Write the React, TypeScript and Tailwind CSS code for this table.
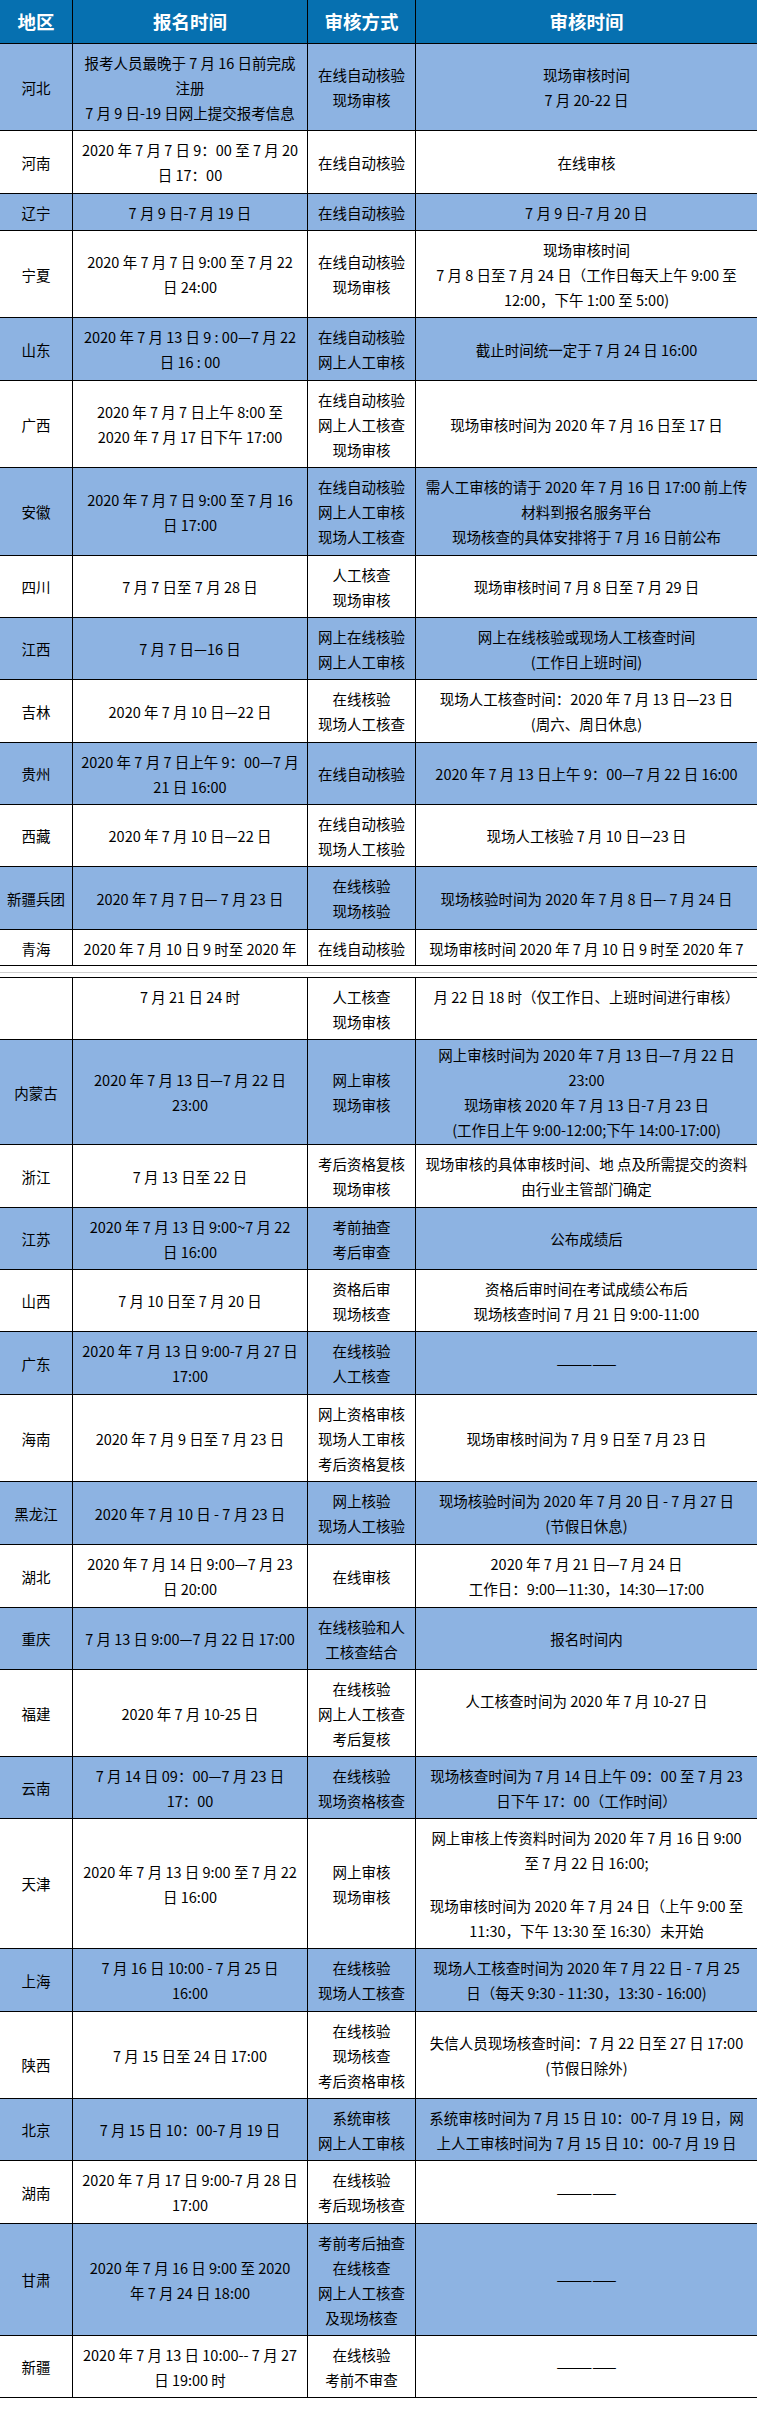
type Row = {
  h: string;
  blue?: boolean;
  top?: boolean;
  cells: string[][];
};

const DASH = "—————";

const table1: Row[] = [
  {
    h: "h-[87px]",
    blue: true,
    cells: [
      ["河北"],
      ["报考人员最晚于 7 月 16 日前完成", "注册", "7 月 9 日-19 日网上提交报考信息"],
      ["在线自动核验", "现场审核"],
      ["现场审核时间", "7 月 20-22 日"],
    ],
  },
  {
    h: "h-[63px]",
    cells: [
      ["河南"],
      ["2020 年 7 月 7 日 9：00 至 7 月 20", "日 17：00"],
      ["在线自动核验"],
      ["在线审核"],
    ],
  },
  {
    h: "h-[37px]",
    blue: true,
    cells: [["辽宁"], ["7 月 9 日-7 月 19 日"], ["在线自动核验"], ["7 月 9 日-7 月 20 日"]],
  },
  {
    h: "h-[87px]",
    cells: [
      ["宁夏"],
      ["2020 年 7 月 7 日 9:00 至 7 月 22", "日 24:00"],
      ["在线自动核验", "现场审核"],
      ["现场审核时间", "7 月 8 日至 7 月 24 日（工作日每天上午 9:00 至", "12:00，下午 1:00 至 5:00)"],
    ],
  },
  {
    h: "h-[63px]",
    blue: true,
    cells: [
      ["山东"],
      ["2020 年 7 月 13 日 9 : 00—7 月 22", "日 16 : 00"],
      ["在线自动核验", "网上人工审核"],
      ["截止时间统一定于 7 月 24 日 16:00"],
    ],
  },
  {
    h: "h-[87px]",
    cells: [
      ["广西"],
      ["2020 年 7 月 7 日上午 8:00 至", "2020 年 7 月 17 日下午 17:00"],
      ["在线自动核验", "网上人工核查", "现场审核"],
      ["现场审核时间为 2020 年 7 月 16 日至 17 日"],
    ],
  },
  {
    h: "h-[88px]",
    blue: true,
    cells: [
      ["安徽"],
      ["2020 年 7 月 7 日 9:00 至 7 月 16", "日 17:00"],
      ["在线自动核验", "网上人工审核", "现场人工核查"],
      ["需人工审核的请于 2020 年 7 月 16 日 17:00 前上传", "材料到报名服务平台", "现场核查的具体安排将于 7 月 16 日前公布"],
    ],
  },
  {
    h: "h-[62px]",
    cells: [["四川"], ["7 月 7 日至 7 月 28 日"], ["人工核查", "现场审核"], ["现场审核时间 7 月 8 日至 7 月 29 日"]],
  },
  {
    h: "h-[62px]",
    blue: true,
    cells: [
      ["江西"],
      ["7 月 7 日—16 日"],
      ["网上在线核验", "网上人工审核"],
      ["网上在线核验或现场人工核查时间", "(工作日上班时间)"],
    ],
  },
  {
    h: "h-[63px]",
    cells: [
      ["吉林"],
      ["2020 年 7 月 10 日—22 日"],
      ["在线核验", "现场人工核查"],
      ["现场人工核查时间：2020 年 7 月 13 日—23 日", "(周六、周日休息)"],
    ],
  },
  {
    h: "h-[62px]",
    blue: true,
    cells: [
      ["贵州"],
      ["2020 年 7 月 7 日上午 9：00—7 月", "21 日 16:00"],
      ["在线自动核验"],
      ["2020 年 7 月 13 日上午 9：00—7 月 22 日 16:00"],
    ],
  },
  {
    h: "h-[62px]",
    cells: [
      ["西藏"],
      ["2020 年 7 月 10 日—22 日"],
      ["在线自动核验", "现场人工核验"],
      ["现场人工核验 7 月 10 日—23 日"],
    ],
  },
  {
    h: "h-[63px]",
    blue: true,
    cells: [
      ["新疆兵团"],
      ["2020 年 7 月 7 日— 7 月 23 日"],
      ["在线核验", "现场核验"],
      ["现场核验时间为 2020 年 7 月 8 日— 7 月 24 日"],
    ],
  },
  {
    h: "h-[36px]",
    top: true,
    cells: [
      ["青海"],
      ["2020 年 7 月 10 日 9 时至 2020 年"],
      ["在线自动核验"],
      ["现场审核时间 2020 年 7 月 10 日 9 时至 2020 年 7"],
    ],
  },
];

const table2: Row[] = [
  {
    h: "h-[62px]",
    top: true,
    cells: [[], ["7 月 21 日 24 时"], ["人工核查", "现场审核"], ["月 22 日 18 时（仅工作日、上班时间进行审核）"]],
  },
  {
    h: "h-[105px]",
    blue: true,
    cells: [
      ["内蒙古"],
      ["2020 年 7 月 13 日—7 月 22 日", "23:00"],
      ["网上审核", "现场审核"],
      [
        "网上审核时间为 2020 年 7 月 13 日—7 月 22 日",
        "23:00",
        "现场审核 2020 年 7 月 13 日-7 月 23 日",
        "(工作日上午 9:00-12:00;下午 14:00-17:00)",
      ],
    ],
  },
  {
    h: "h-[63px]",
    cells: [
      ["浙江"],
      ["7 月 13 日至 22 日"],
      ["考后资格复核", "现场审核"],
      ["现场审核的具体审核时间、地 点及所需提交的资料", "由行业主管部门确定"],
    ],
  },
  {
    h: "h-[62px]",
    blue: true,
    cells: [["江苏"], ["2020 年 7 月 13 日 9:00~7 月 22", "日 16:00"], ["考前抽查", "考后审查"], ["公布成绩后"]],
  },
  {
    h: "h-[62px]",
    cells: [
      ["山西"],
      ["7 月 10 日至 7 月 20 日"],
      ["资格后审", "现场核查"],
      ["资格后审时间在考试成绩公布后", "现场核查时间 7 月 21 日 9:00-11:00"],
    ],
  },
  {
    h: "h-[63px]",
    blue: true,
    cells: [["广东"], ["2020 年 7 月 13 日 9:00-7 月 27 日", "17:00"], ["在线核验", "人工核查"], [DASH]],
  },
  {
    h: "h-[87px]",
    cells: [
      ["海南"],
      ["2020 年 7 月 9 日至 7 月 23 日"],
      ["网上资格审核", "现场人工审核", "考后资格复核"],
      ["现场审核时间为 7 月 9 日至 7 月 23 日"],
    ],
  },
  {
    h: "h-[63px]",
    blue: true,
    cells: [
      ["黑龙江"],
      ["2020 年 7 月 10 日 - 7 月 23 日"],
      ["网上核验", "现场人工核验"],
      ["现场核验时间为 2020 年 7 月 20 日 - 7 月 27 日", "(节假日休息)"],
    ],
  },
  {
    h: "h-[63px]",
    cells: [
      ["湖北"],
      ["2020 年 7 月 14 日 9:00—7 月 23", "日 20:00"],
      ["在线审核"],
      ["2020 年 7 月 21 日—7 月 24 日", "工作日：9:00—11:30，14:30—17:00"],
    ],
  },
  {
    h: "h-[62px]",
    blue: true,
    cells: [["重庆"], ["7 月 13 日 9:00—7 月 22 日 17:00"], ["在线核验和人", "工核查结合"], ["报名时间内"]],
  },
  {
    h: "h-[87px]",
    cells: [
      ["福建"],
      ["2020 年 7 月 10-25 日"],
      ["在线核验", "网上人工核查", "考后复核"],
      ["人工核查时间为 2020 年 7 月 10-27 日", ""],
    ],
  },
  {
    h: "h-[62px]",
    blue: true,
    cells: [
      ["云南"],
      ["7 月 14 日 09：00—7 月 23 日", "17：00"],
      ["在线核验", "现场资格核查"],
      ["现场核查时间为 7 月 14 日上午 09：00 至 7 月 23", "日下午 17：00（工作时间）"],
    ],
  },
  {
    h: "h-[130px]",
    cells: [
      ["天津"],
      ["2020 年 7 月 13 日 9:00 至 7 月 22", "日 16:00"],
      ["网上审核", "现场审核"],
      [
        "网上审核上传资料时间为 2020 年 7 月 16 日 9:00",
        "至 7 月 22 日 16:00;",
        "~",
        "现场审核时间为 2020 年 7 月 24 日（上午 9:00 至",
        "11:30，下午 13:30 至 16:30）未开始",
      ],
    ],
  },
  {
    h: "h-[63px]",
    blue: true,
    cells: [
      ["上海"],
      ["7 月 16 日 10:00 - 7 月 25 日", "16:00"],
      ["在线核验", "现场人工核查"],
      ["现场人工核查时间为 2020 年 7 月 22 日 - 7 月 25", "日（每天 9:30 - 11:30，13:30 - 16:00)"],
    ],
  },
  {
    h: "h-[87px]",
    cells: [
      ["~", "陕西"],
      ["7 月 15 日至 24 日 17:00"],
      ["在线核验", "现场核查", "考后资格审核"],
      ["失信人员现场核查时间：7 月 22 日至 27 日 17:00", "(节假日除外)"],
    ],
  },
  {
    h: "h-[62px]",
    blue: true,
    cells: [
      ["北京"],
      ["7 月 15 日 10：00-7 月 19 日"],
      ["系统审核", "网上人工审核"],
      ["系统审核时间为 7 月 15 日 10：00-7 月 19 日，网", "上人工审核时间为 7 月 15 日 10：00-7 月 19 日"],
    ],
  },
  {
    h: "h-[63px]",
    cells: [["湖南"], ["2020 年 7 月 17 日 9:00-7 月 28 日", "17:00"], ["在线核验", "考后现场核查"], [DASH]],
  },
  {
    h: "h-[112px]",
    blue: true,
    cells: [
      ["甘肃"],
      ["2020 年 7 月 16 日 9:00 至 2020", "年 7 月 24 日 18:00"],
      ["考前考后抽查", "在线核查", "网上人工核查", "及现场核查"],
      [DASH],
    ],
  },
  {
    h: "h-[62px]",
    cells: [["新疆"], ["2020 年 7 月 13 日 10:00-- 7 月 27", "日 19:00 时"], ["在线核验", "考前不审查"], [DASH]],
  },
];

const cols = "grid grid-cols-[73px_235px_108px_1fr]";

function TableRow({ row }: { row: Row }) {
  return (
    <div
      className={`${cols} ${row.h} border-b border-black overflow-hidden ${
        row.blue ? "bg-[#8db3e2]" : "bg-white"
      }`}
    >
      {row.cells.map((lines, i) => (
        <div
          key={i}
          className={`flex flex-col items-center text-center overflow-hidden ${
            row.top ? "justify-start pt-[6px]" : "justify-center"
          } ${i < 3 ? "border-r border-black" : ""}`}
        >
          {lines.map((line, j) =>
            line === "~" ? (
              <div key={j} className="h-[18px]" />
            ) : (
              <div key={j} className="whitespace-nowrap leading-[25px] h-[25px]">
                {line}
              </div>
            )
          )}
        </div>
      ))}
    </div>
  );
}

export default function App() {
  return (
    <div className="w-[757px] min-h-[2415px] bg-white text-black text-[14.5px] font-['Noto_Sans_CJK_SC','Noto_Sans',sans-serif]">
      {/* Page 1 */}
      <div>
        <div className={`${cols} h-[44px] border-b border-black bg-[#0670b0] text-white font-bold text-[18.5px]`}>
          <div className="flex items-center justify-center border-r border-black">地区</div>
          <div className="flex items-center justify-center border-r border-black">报名时间</div>
          <div className="flex items-center justify-center border-r border-black">审核方式</div>
          <div className="flex items-center justify-center">审核时间</div>
        </div>
        {table1.map((row, i) => (
          <TableRow key={i} row={row} />
        ))}
      </div>

      {/* Page break */}
      <div className="h-[11px] pt-[6px]">
        <div className="h-px bg-[#cfcfcf]" />
      </div>

      {/* Page 2 */}
      <div className="border-t border-black">
        {table2.map((row, i) => (
          <TableRow key={i} row={row} />
        ))}
      </div>
    </div>
  );
}
